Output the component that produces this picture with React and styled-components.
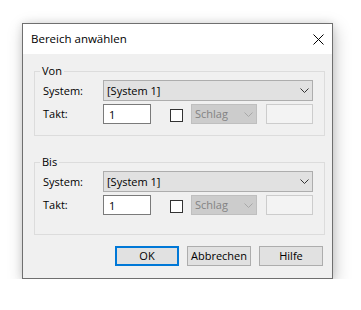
import React from "react";
import styled, { createGlobalStyle } from "styled-components";

const GlobalStyle = createGlobalStyle`
  html, body { margin: 0; padding: 0; background: #ffffff; }
  body { font-family: "Open Sans", "Noto Sans", sans-serif; color: #000; }
  * { box-sizing: border-box; }
`;

const Page = styled.div`
  padding: 23px 0 0 22px;
`;

const Dialog = styled.div`
  width: 311px;
  border: 1px solid #6f6f6f;
  background: #f0f0f0;
  box-shadow: 0 0 8px rgba(0, 0, 0, 0.1), 2px 5px 16px rgba(0, 0, 0, 0.22);
`;

const TitleBar = styled.div`
  height: 30px;
  background: #ffffff;
  display: flex;
  align-items: center;
  justify-content: space-between;
  padding-left: 8px;
`;

const Title = styled.span`
  font-size: 11.5px;
  line-height: 16px;
`;

const CloseButton = styled.div`
  width: 28px;
  height: 30px;
  display: flex;
  align-items: center;
  justify-content: center;
`;

const Body = styled.div`
  padding: 17px 7px 12px 11px;
`;

const GroupBox = styled.div`
  position: relative;
  border: 1px solid #dcdcdc;
  margin-top: ${(p) => p.$gapTop || 0}px;
  padding: ${(p) => p.$padTop}px 11px ${(p) => p.$padBottom}px 8px;
  display: flex;
  flex-direction: column;
  gap: 3px;
`;

const GroupLabel = styled.span`
  position: absolute;
  top: -8px;
  left: 5px;
  padding: 0 2px;
  background: #f0f0f0;
  font-size: 11px;
  line-height: 14px;
`;

const FieldRow = styled.div`
  display: flex;
  align-items: center;
`;

const Label = styled.span`
  width: 60px;
  flex: none;
  font-size: 11px;
  line-height: 14px;
`;

const Combo = styled.div`
  width: ${(p) => p.$width}px;
  height: ${(p) => p.$height}px;
  margin-left: ${(p) => p.$ml || 0}px;
  flex: none;
  display: flex;
  align-items: center;
  justify-content: space-between;
  padding: 0 3px 0 3px;
  border: 1px solid ${(p) => (p.$disabled ? "#bfbfbf" : "#adadad")};
  background: ${(p) => (p.$disabled ? "#cccccc" : "#e1e1e1")};
  color: ${(p) => (p.$disabled ? "#838383" : "#000000")};
  font-size: 11px;
  line-height: 14px;
`;

const TextInput = styled.input`
  width: 48px;
  height: 20px;
  flex: none;
  margin: 0;
  padding: 0 0 0 5px;
  border: 1px solid #7a7a7a;
  background: #ffffff;
  font: inherit;
  font-size: 11px;
  color: #000;
  outline: none;
`;

const CheckBox = styled.span`
  width: 13px;
  height: 13px;
  flex: none;
  margin: 3px 0 0 19px;
  border: 1px solid #333333;
  background: #ffffff;
`;

const DisabledEdit = styled.span`
  width: 47px;
  height: 20px;
  flex: none;
  margin-left: 9px;
  border: 1px solid #cccccc;
  background: #f3f3f3;
`;

const ButtonRow = styled.div`
  display: flex;
  justify-content: flex-end;
  gap: 8px;
  margin-top: 11px;
  padding-right: 2px;
`;

const Button = styled.div`
  width: 64px;
  height: 20px;
  display: flex;
  align-items: center;
  justify-content: center;
  border: ${(p) => (p.$default ? "2px solid #0078d7" : "1px solid #adadad")};
  background: #e1e1e1;
  font-size: 11px;
  line-height: 14px;
`;

const Chevron = ({ color }) => (
  <svg width="9" height="5" viewBox="0 0 9 5">
    <polyline points="0.5,0.5 4.5,4.5 8.5,0.5" fill="none" stroke={color} strokeWidth="1" />
  </svg>
);

const Range = ({ legend, padTop, padBottom, gapTop }) => (
  <GroupBox $padTop={padTop} $padBottom={padBottom} $gapTop={gapTop}>
    <GroupLabel>{legend}</GroupLabel>
    <FieldRow>
      <Label>System:</Label>
      <Combo $width={210} $height={21}>
        <span>[System 1]</span>
        <Chevron color="#333333" />
      </Combo>
    </FieldRow>
    <FieldRow>
      <Label>Takt:</Label>
      <TextInput readOnly defaultValue="1" />
      <CheckBox />
      <Combo $width={66} $height={20} $ml={8} $disabled>
        <span>Schlag</span>
        <Chevron color="#a8a8a8" />
      </Combo>
      <DisabledEdit />
    </FieldRow>
  </GroupBox>
);

export default function App() {
  return (
    <>
      <GlobalStyle />
      <Page>
        <Dialog>
          <TitleBar>
            <Title>Bereich anwählen</Title>
            <CloseButton>
              <svg width="11" height="11" viewBox="0 0 11 11">
                <path d="M0.5 0.5 L10.5 10.5 M10.5 0.5 L0.5 10.5" stroke="#000" strokeWidth="1" fill="none" />
              </svg>
            </CloseButton>
          </TitleBar>
          <Body>
            <Range legend="Von" padTop={8} padBottom={11} />
            <Range legend="Bis" padTop={8} padBottom={19} gapTop={26} />
            <ButtonRow>
              <Button $default>OK</Button>
              <Button>Abbrechen</Button>
              <Button>Hilfe</Button>
            </ButtonRow>
          </Body>
        </Dialog>
      </Page>
    </>
  );
}
